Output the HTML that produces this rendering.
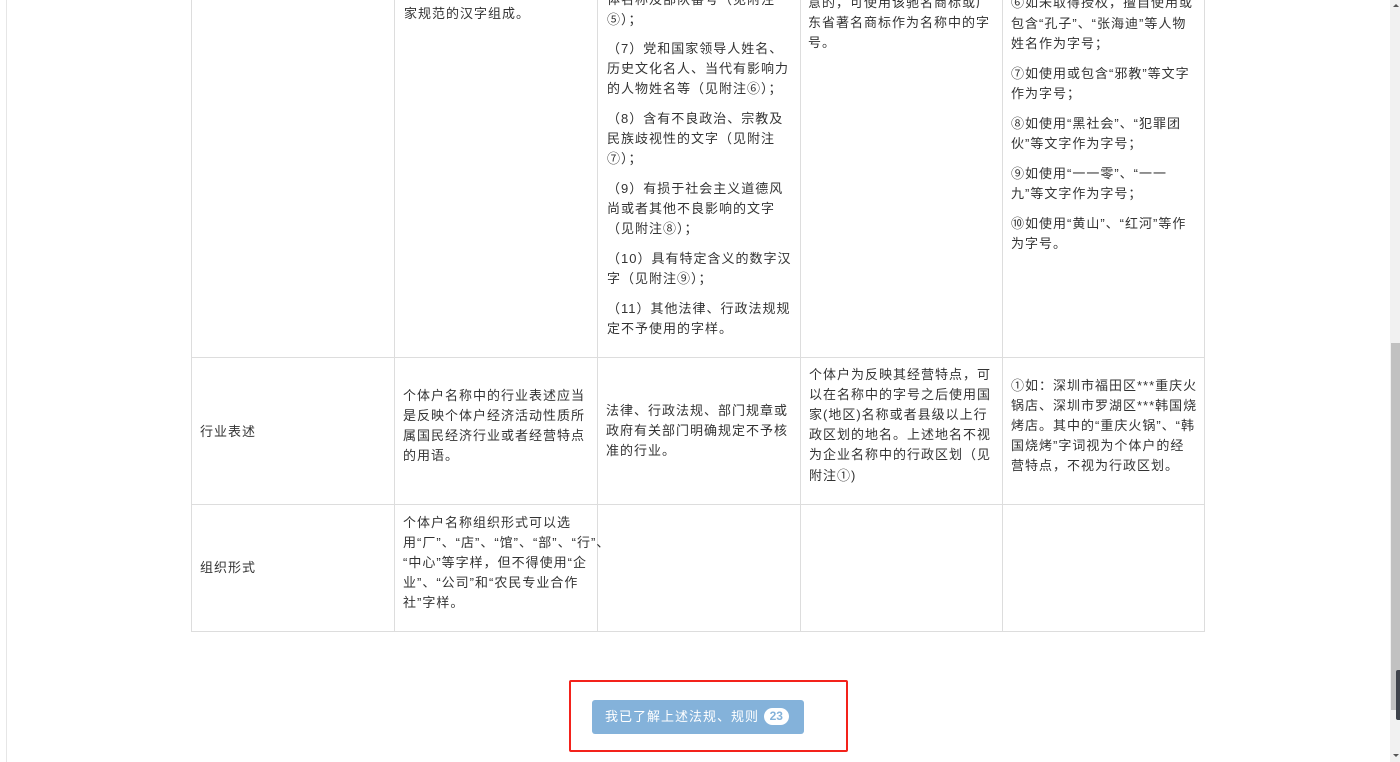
<!DOCTYPE html>
<html><head><meta charset="utf-8"><style>
*{margin:0;padding:0;box-sizing:border-box}
html,body{width:1400px;height:762px;overflow:hidden;background:#fff;font-family:"Liberation Sans","Noto Sans CJK SC",sans-serif;color:#333}
.a{position:absolute}
.l{position:absolute;font-size:13px;line-height:20px;white-space:nowrap;color:#333;letter-spacing:1px}
.v{position:absolute;width:1px;background:#ddd}
.h{position:absolute;height:1px;background:#ddd}
</style></head><body>
<div class="a" style="left:6px;top:0;width:1px;height:762px;background:#e6e6e6"></div>
<div class="v" style="left:191px;top:0;height:632px"></div>
<div class="v" style="left:394px;top:0;height:632px"></div>
<div class="v" style="left:597px;top:0;height:632px"></div>
<div class="v" style="left:800px;top:0;height:632px"></div>
<div class="v" style="left:1002px;top:0;height:632px"></div>
<div class="v" style="left:1204px;top:0;height:632px"></div>
<div class="h" style="left:191px;top:357px;width:1014px"></div>
<div class="h" style="left:191px;top:504px;width:1014px"></div>
<div class="h" style="left:191px;top:631px;width:1014px"></div>

<div class="l" style="left:404px;top:-16px">个体户名称应当使用符合国</div>
<div class="l" style="left:404px;top:4px">家规范的汉字组成。</div>

<div class="l" style="left:607px;top:-10px">体名称及部队番号（见附注</div>
<div class="l" style="left:607px;top:10px">⑤）；</div>
<div class="l" style="left:607px;top:39px">（7）党和国家领导人姓名、</div>
<div class="l" style="left:607px;top:59px">历史文化名人、当代有影响力</div>
<div class="l" style="left:607px;top:79px">的人物姓名等（见附注⑥）；</div>
<div class="l" style="left:607px;top:109px">（8）含有不良政治、宗教及</div>
<div class="l" style="left:607px;top:129px">民族歧视性的文字（见附注</div>
<div class="l" style="left:607px;top:149px">⑦）；</div>
<div class="l" style="left:607px;top:179px">（9）有损于社会主义道德风</div>
<div class="l" style="left:607px;top:199px">尚或者其他不良影响的文字</div>
<div class="l" style="left:607px;top:219px">（见附注⑧）；</div>
<div class="l" style="left:607px;top:249px">（10）具有特定含义的数字汉</div>
<div class="l" style="left:607px;top:269px">字（见附注⑨）；</div>
<div class="l" style="left:607px;top:299px">（11）其他法律、行政法规规</div>
<div class="l" style="left:607px;top:319px">定不予使用的字样。</div>

<div class="l" style="left:808px;top:-7px">意的，可使用该驰名商标或广</div>
<div class="l" style="left:808px;top:13px">东省著名商标作为名称中的字</div>
<div class="l" style="left:808px;top:33px">号。</div>

<div class="l" style="left:1011px;top:-7px">⑥如未取得授权，擅自使用或</div>
<div class="l" style="left:1011px;top:14px">包含“孔子”、“张海迪”等人物</div>
<div class="l" style="left:1011px;top:34px">姓名作为字号；</div>
<div class="l" style="left:1011px;top:64px">⑦如使用或包含“邪教”等文字</div>
<div class="l" style="left:1011px;top:84px">作为字号；</div>
<div class="l" style="left:1011px;top:114px">⑧如使用“黑社会”、“犯罪团</div>
<div class="l" style="left:1011px;top:134px">伙”等文字作为字号；</div>
<div class="l" style="left:1011px;top:164px">⑨如使用“一一零”、“一一</div>
<div class="l" style="left:1011px;top:184px">九”等文字作为字号；</div>
<div class="l" style="left:1011px;top:214px">⑩如使用“黄山”、“红河”等作</div>
<div class="l" style="left:1011px;top:234px">为字号。</div>

<div class="l" style="left:200px;top:422px">行业表述</div>
<div class="l" style="left:403px;top:386px">个体户名称中的行业表述应当</div>
<div class="l" style="left:403px;top:406px">是反映个体户经济活动性质所</div>
<div class="l" style="left:403px;top:426px">属国民经济行业或者经营特点</div>
<div class="l" style="left:403px;top:446px">的用语。</div>
<div class="l" style="left:606px;top:401px">法律、行政法规、部门规章或</div>
<div class="l" style="left:606px;top:421px">政府有关部门明确规定不予核</div>
<div class="l" style="left:606px;top:441px">准的行业。</div>
<div class="l" style="left:809px;top:365px">个体户为反映其经营特点，可</div>
<div class="l" style="left:809px;top:385px">以在名称中的字号之后使用国</div>
<div class="l" style="left:809px;top:405px">家(地区)名称或者县级以上行</div>
<div class="l" style="left:809px;top:425px">政区划的地名。上述地名不视</div>
<div class="l" style="left:809px;top:445px">为企业名称中的行政区划（见</div>
<div class="l" style="left:809px;top:466px">附注①)</div>
<div class="l" style="left:1011px;top:376px">①如：深圳市福田区***重庆火</div>
<div class="l" style="left:1011px;top:396px">锅店、深圳市罗湖区***韩国烧</div>
<div class="l" style="left:1011px;top:416px">烤店。其中的“重庆火锅”、“韩</div>
<div class="l" style="left:1011px;top:436px">国烧烤”字词视为个体户的经</div>
<div class="l" style="left:1011px;top:456px">营特点，不视为行政区划。</div>

<div class="l" style="left:200px;top:558px">组织形式</div>
<div class="l" style="left:403px;top:513px">个体户名称组织形式可以选</div>
<div class="l" style="left:403px;top:533px">用“厂”、“店”、“馆”、“部”、“行”、</div>
<div class="l" style="left:403px;top:553px">“中心”等字样，但不得使用“企</div>
<div class="l" style="left:403px;top:573px">业”、“公司”和“农民专业合作</div>
<div class="l" style="left:403px;top:593px">社”字样。</div>

<div class="a" style="left:569px;top:680px;width:279px;height:72px;border:2px solid #f3221b;border-radius:2px"></div>
<div class="a" style="left:592px;top:700px;width:212px;height:34px;background:#84b2da;border-radius:3px;color:#fff;font-size:13px;line-height:34px;padding-left:13px;white-space:nowrap;letter-spacing:1px">我已了解上述法规、规则 <span style="display:inline-block;background:#fff;color:#84b2da;border-radius:9px;font-size:12px;font-weight:bold;line-height:17px;padding:0 6px;letter-spacing:0;vertical-align:1px">23</span></div>

<div class="a" style="left:1390px;top:0;width:10px;height:762px;background:#f1f1f1"></div>
<div class="a" style="left:1391px;top:343px;width:9px;height:367px;background:#c1c1c1"></div>
<div class="a" style="left:1396px;top:670px;width:4px;height:50px;background:#3f434b;border-radius:2px 0 0 2px"></div>
<div class="a" style="left:1393px;top:4px;width:0;height:0;border-left:3px solid transparent;border-right:3px solid transparent;border-bottom:3px solid #555"></div>
<div class="a" style="left:1393px;top:754px;width:0;height:0;border-left:3px solid transparent;border-right:3px solid transparent;border-top:3px solid #555"></div>
</body></html>
